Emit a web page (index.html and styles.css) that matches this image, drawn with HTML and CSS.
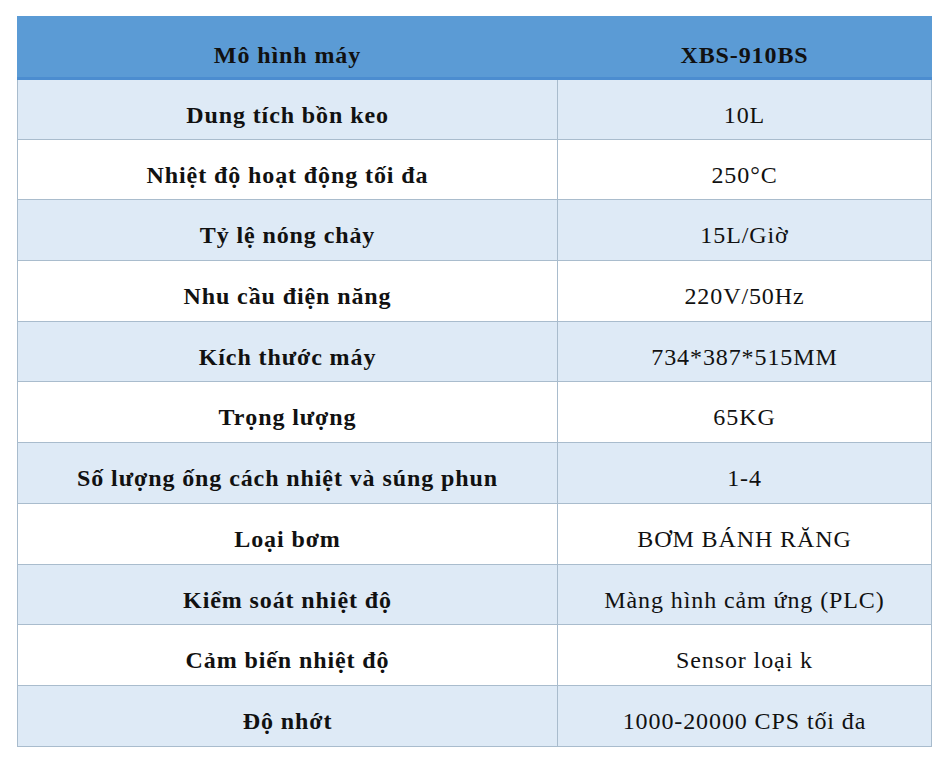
FILE: index.html
```html
<!DOCTYPE html>
<html lang="vi">
<head>
    <meta charset="UTF-8">
    <meta name="viewport" content="width=device-width, initial-scale=1.0">
    <title>Thông số kỹ thuật XBS-910BS</title>
    <link rel="stylesheet" href="styles.css">
</head>
<body>

    <table class="spec-table">
        <colgroup>
            <col class="col-label">
            <col class="col-value">
        </colgroup>
        <thead>
            <tr>
                <th>Mô hình máy</th>
                <th>XBS-910BS</th>
            </tr>
        </thead>
        <tbody>
            <tr class="shade">
                <td class="label">Dung tích bồn keo</td>
                <td>10L</td>
            </tr>
            <tr>
                <td class="label">Nhiệt độ hoạt động tối đa</td>
                <td>250°C</td>
            </tr>
            <tr class="shade">
                <td class="label">Tỷ lệ nóng chảy</td>
                <td>15L/Giờ</td>
            </tr>
            <tr>
                <td class="label">Nhu cầu điện năng</td>
                <td>220V/50Hz</td>
            </tr>
            <tr class="shade">
                <td class="label">Kích thước máy</td>
                <td>734*387*515MM</td>
            </tr>
            <tr>
                <td class="label">Trọng lượng</td>
                <td>65KG</td>
            </tr>
            <tr class="shade">
                <td class="label">Số lượng ống cách nhiệt và súng phun</td>
                <td>1-4</td>
            </tr>
            <tr>
                <td class="label">Loại bơm</td>
                <td>BƠM BÁNH RĂNG</td>
            </tr>
            <tr class="shade">
                <td class="label">Kiểm soát nhiệt độ</td>
                <td>Màng hình cảm ứng (PLC)</td>
            </tr>
            <tr>
                <td class="label">Cảm biến nhiệt độ</td>
                <td>Sensor loại k</td>
            </tr>
            <tr class="shade">
                <td class="label">Độ nhớt</td>
                <td>1000-20000 CPS tối đa</td>
            </tr>
        </tbody>
    </table>

</body>
</html>
```

FILE: styles.css
```css
body {
    margin: 0;
    padding: 16px 0 0 17px;
    background-color: #ffffff;
    font-family: "Liberation Serif", "Times New Roman", serif;
    color: #111;
}
.spec-table {
    width: 915px;
    border-collapse: collapse;
    table-layout: fixed;
}
.col-label {
    width: 540px;
}
.spec-table th,
.spec-table td {
    box-sizing: border-box;
    text-align: center;
    vertical-align: top;
    font-size: 24px;
    letter-spacing: 0.9px;
    line-height: 27px;
    padding: 22px 4px 0 4px;
    border: 1px solid #a9bccd;
}
.spec-table thead th {
    height: 62px;
    padding-top: 25px;
    background-color: #5b9bd5;
    font-weight: bold;
    border-color: #5b9bd5;
    border-bottom: 3px solid #4c8dd0;
}
.spec-table tbody td {
    height: 60.7px;
}
.spec-table tbody tr.shade td {
    background-color: #deeaf6;
}
.spec-table td.label {
    font-weight: bold;
}
```
